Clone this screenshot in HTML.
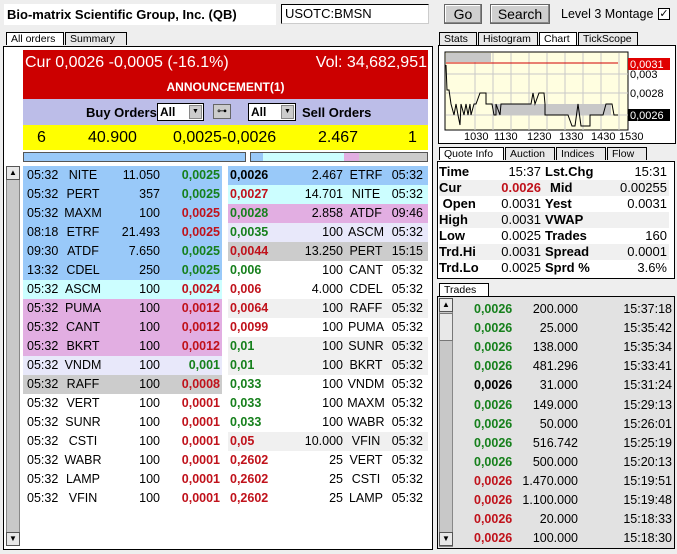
<!DOCTYPE html>
<html><head><meta charset="utf-8"><style>
*{box-sizing:border-box;margin:0;padding:0}
body{width:677px;height:554px;background:#eeeeee;font-family:"Liberation Sans",Arial,sans-serif;font-size:12px;position:relative;overflow:hidden;color:#000}
.abs{position:absolute}
.tab{position:absolute;height:13px;border:1px solid #000;border-bottom:none;background:#e8e8e8;font-size:10.5px;line-height:12px;padding-left:4px;white-space:nowrap;overflow:hidden}
.tab.on{background:#fff}
.row{position:absolute;height:19px;line-height:19px;font-size:12.5px;white-space:nowrap}
.row span{position:absolute}
.g{color:#16801c;font-weight:bold}.r{color:#c0121b;font-weight:bold}.k{color:#000;font-weight:bold}
.bl{background:#99c9f9}.cy{background:#ccfeff}.pk{background:#e2aee2}.lv{background:#e8e8fa}.gr{background:#cccccc}.lg{background:#f0f0f0}.wh{background:#fff}
.q{position:absolute;left:439px;width:230px;height:16px;line-height:16px;font-size:13px}
.q span{position:absolute}
.btn{position:absolute;border:1px solid #666;background:#cfcfcf;font-size:14px;text-align:center;line-height:18px;box-shadow:inset -1px -1px #888,inset 1px 1px #fff}
.sb{position:absolute;width:14px;background:#c8c8c8;border:1px solid #888}
.arr{position:absolute;width:14px;height:14px;background:#e8e8e8;border:1px solid #555;font-size:8px;text-align:center;line-height:12px}
</style></head><body>
<div class="abs" style="left:4px;top:4px;width:272px;height:21px;background:#fff;font-weight:bold;font-size:13px;line-height:21px;padding-left:3px">Bio-matrix Scientific Group, Inc. (QB)</div>
<div class="abs" style="left:281px;top:4px;width:148px;height:20px;background:#fff;border:1px solid #000;border-right-color:#ccc;border-bottom-color:#ccc;font-size:13px;line-height:18px;padding-left:3px">USOTC:BMSN</div>
<div class="btn" style="left:444px;top:4px;width:38px;height:20px">Go</div>
<div class="btn" style="left:490px;top:4px;width:60px;height:20px">Search</div>
<div class="abs" style="left:561px;top:5px;font-size:12.5px;line-height:18px">Level 3 Montage</div>
<div class="abs" style="left:658px;top:8px;width:12px;height:12px;border:1px solid #000;background:#fff;font-size:11px;line-height:10px;text-align:center">✓</div>

<div class="tab on" style="left:6px;top:32px;width:58px">All orders</div>
<div class="tab" style="left:65px;top:32px;width:62px">Summary</div>
<div class="abs" style="left:3px;top:46px;width:430px;height:504px;border:1px solid #000;background:#fff"></div>
<div class="abs" style="left:23px;top:50px;width:405px;height:49px;background:#cc0000;color:#fff">
<div class="abs" style="left:2px;top:4px;font-size:16px">Cur 0,0026 -0,0005 (-16.1%)</div>
<div class="abs" style="right:1px;top:4px;font-size:16px">Vol: 34,682,951</div>
<div class="abs" style="left:0;width:405px;top:30px;text-align:center;font-weight:bold;font-size:12px">ANNOUNCEMENT(1)</div></div>
<div class="abs" style="left:23px;top:99px;width:405px;height:26px;background:#bcbde8">
<div class="abs" style="left:63px;top:6px;font-weight:bold;font-size:13px">Buy Orders</div>
<div class="abs" style="left:134px;top:4px;width:47px;height:18px;background:#fff;border:1px solid #000;font-weight:bold;line-height:16px;padding-left:2px">All<div class="abs" style="right:1px;top:1px;width:13px;height:14px;background:#ccc;border:1px solid #888;font-size:7px;text-align:center;line-height:12px">▼</div></div>
<div class="abs" style="left:190px;top:5px;width:18px;height:15px;background:#ccc;border:1px solid #666;font-size:10px;text-align:center;line-height:13px">⊶</div>
<div class="abs" style="left:225px;top:4px;width:48px;height:18px;background:#fff;border:1px solid #000;font-weight:bold;line-height:16px;padding-left:2px">All<div class="abs" style="right:1px;top:1px;width:13px;height:14px;background:#ccc;border:1px solid #888;font-size:7px;text-align:center;line-height:12px">▼</div></div>
<div class="abs" style="left:279px;top:6px;font-weight:bold;font-size:13px">Sell Orders</div></div>
<div class="abs" style="left:23px;top:125px;width:405px;height:25px;background:#ffff00;font-size:16px;line-height:25px">
<span class="abs" style="left:14px">6</span><span class="abs" style="left:65px">40.900</span><span class="abs" style="left:150px">0,0025-0,0026</span><span class="abs" style="left:295px">2.467</span><span class="abs" style="left:385px">1</span></div>
<div class="abs" style="left:23px;top:152px;width:223px;height:10px;border:1px solid #555;background:#99c9f9"></div>
<div class="abs" style="left:250px;top:152px;width:178px;height:10px;border:1px solid #555;background:linear-gradient(90deg,#99c9f9 0 12px,#ccfeff 12px 93px,#e2aee2 93px 108px,#ccc 108px)"></div>

<div class="sb" style="left:6px;top:166px;height:380px"></div>
<div class="arr" style="left:6px;top:166px">▲</div>
<div class="arr" style="left:6px;top:532px">▼</div>

<div id="ob"></div>

<div class="tab" style="left:439px;top:32px;width:38px">Stats</div>
<div class="tab" style="left:478px;top:32px;width:60px">Histogram</div>
<div class="tab on" style="left:539px;top:32px;width:38px">Chart</div>
<div class="tab" style="left:578px;top:32px;width:60px">TickScope</div>
<div class="abs" style="left:438px;top:45px;width:238px;height:99px;border:1px solid #000;background:#fff"></div>
<svg class="abs" style="left:438px;top:45px" width="238" height="99">
<rect x="7" y="7" width="183" height="78" fill="#fffee0" stroke="#000"/>
<g stroke="#c8c8c8"><line x1="37" y1="8" x2="37" y2="85"/><line x1="55" y1="8" x2="55" y2="85"/><line x1="73" y1="8" x2="73" y2="85"/><line x1="91" y1="8" x2="91" y2="85"/><line x1="109" y1="8" x2="109" y2="85"/><line x1="127" y1="8" x2="127" y2="85"/><line x1="145" y1="8" x2="145" y2="85"/><line x1="163" y1="8" x2="163" y2="85"/><line x1="181" y1="8" x2="181" y2="85"/><line x1="8" y1="29" x2="190" y2="29"/><line x1="8" y1="48" x2="190" y2="48"/><line x1="8" y1="70" x2="190" y2="70"/></g>
<rect x="8" y="8" width="45" height="9" fill="#c8c8c8"/>
<rect x="55" y="59" width="118" height="11" fill="#c8c8c8"/>
<line x1="8" y1="18" x2="180" y2="18" stroke="#d00000"/>
<polyline fill="none" stroke="#000" points="8,20 9,45 11,45 13,59 16,70 18,59 20,70 22,80 23,59 26,70 28,59 30,70 32,59 33,70 36,59 38,59 42,48 48,48 48,59 54,59 56,70 58,70 58,59 62,70 63,59 93,59 95,48 97,59 101,48 106,48 107,59 107,70 130,70 134,81 137,81 140,59 143,81 152,81 152,70 165,70 168,59 174,59 176,70 180,70"/>
<rect x="190" y="13" width="42" height="12" fill="#e00000"/>
<text x="192" y="23" font-size="11" fill="#fff" font-family="Liberation Sans">0,0031</text>
<text x="192" y="33" font-size="11" font-family="Liberation Sans">0,003</text>
<text x="192" y="52" font-size="11" font-family="Liberation Sans">0,0028</text>
<rect x="190" y="64" width="42" height="12" fill="#000"/>
<text x="192" y="74" font-size="11" fill="#fff" font-family="Liberation Sans">0,0026</text>
<g font-size="11" font-family="Liberation Sans"><text x="26" y="95">1030</text><text x="56" y="95">1130</text><text x="89" y="95">1230</text><text x="121" y="95">1330</text><text x="153" y="95">1430</text><text x="181" y="95">1530</text></g>
</svg>

<div class="tab on" style="left:439px;top:147px;width:65px">Quote Info</div>
<div class="tab" style="left:505px;top:147px;width:50px">Auction</div>
<div class="tab" style="left:556px;top:147px;width:50px">Indices</div>
<div class="tab" style="left:607px;top:147px;width:40px">Flow</div>
<div class="abs" style="left:437px;top:161px;width:238px;height:118px;border:1px solid #000;background:#fff"></div>
<div id="qi"></div>

<div class="tab on" style="left:439px;top:283px;width:50px">Trades</div>
<div class="abs" style="left:437px;top:296px;width:238px;height:253px;border:1px solid #000;background:#e2e2e2"></div>
<div class="sb" style="left:439px;top:298px;height:249px;background:#c8c8c8"></div>
<div class="arr" style="left:439px;top:298px">▲</div>
<div class="abs" style="left:439px;top:313px;width:14px;height:28px;background:#e8e8e8;border:1px solid #777"></div>
<div class="arr" style="left:439px;top:532px">▼</div>
<div id="tr"></div>

<script>
var B=[["05:32","NITE","11.050","0,0025","g","bl"],["05:32","PERT","357","0,0025","g","bl"],["05:32","MAXM","100","0,0025","r","bl"],["08:18","ETRF","21.493","0,0025","r","bl"],["09:30","ATDF","7.650","0,0025","g","bl"],["13:32","CDEL","250","0,0025","g","bl"],["05:32","ASCM","100","0,0024","r","cy"],["05:32","PUMA","100","0,0012","r","pk"],["05:32","CANT","100","0,0012","r","pk"],["05:32","BKRT","100","0,0012","r","pk"],["05:32","VNDM","100","0,001","g","lv"],["05:32","RAFF","100","0,0008","r","gr"],["05:32","VERT","100","0,0001","r","wh"],["05:32","SUNR","100","0,0001","r","wh"],["05:32","CSTI","100","0,0001","r","wh"],["05:32","WABR","100","0,0001","r","wh"],["05:32","LAMP","100","0,0001","r","wh"],["05:32","VFIN","100","0,0001","r","wh"]];
var S=[["0,0026","k","2.467","ETRF","05:32","bl"],["0,0027","r","14.701","NITE","05:32","cy"],["0,0028","g","2.858","ATDF","09:46","pk"],["0,0035","g","100","ASCM","05:32","lv"],["0,0044","r","13.250","PERT","15:15","gr"],["0,006","g","100","CANT","05:32","wh"],["0,006","r","4.000","CDEL","05:32","wh"],["0,0064","r","100","RAFF","05:32","lg"],["0,0099","r","100","PUMA","05:32","wh"],["0,01","g","100","SUNR","05:32","lg"],["0,01","g","100","BKRT","05:32","lg"],["0,033","g","100","VNDM","05:32","wh"],["0,033","g","100","MAXM","05:32","wh"],["0,033","g","100","WABR","05:32","wh"],["0,05","r","10.000","VFIN","05:32","lg"],["0,2602","r","25","VERT","05:32","wh"],["0,2602","r","25","CSTI","05:32","wh"],["0,2602","r","25","LAMP","05:32","wh"]];
var h="";
for(var i=0;i<18;i++){var t=166+i*19,b=B[i];
h+='<div class="row '+b[5]+'" style="left:23px;top:'+t+'px;width:199px"><span style="left:4px">'+b[0]+'</span><span style="left:40px;width:40px;text-align:center">'+b[1]+'</span><span style="right:62px">'+b[2]+'</span><span class="'+b[4]+'" style="right:2px">'+b[3]+'</span></div>';
var s=S[i];
h+='<div class="row '+s[5]+'" style="left:228px;top:'+t+'px;width:200px"><span class="'+s[1]+'" style="left:2px">'+s[0]+'</span><span style="right:85px">'+s[2]+'</span><span style="left:118px;width:40px;text-align:center">'+s[3]+'</span><span style="right:5px">'+s[4]+'</span></div>';}
document.getElementById("ob").innerHTML=h;
var Q=[["Time","15:37","Lst.Chg","15:31"],["Cur","0.0026","Mid","0.00255"],[" Open","0.0031","Yest","0.0031"],["High","0.0031","VWAP",""],["Low","0.0025","Trades","160"],["Trd.Hi","0.0031","Spread","0.0001"],["Trd.Lo","0.0025","Sprd %","3.6%"]];
h="";for(i=0;i<7;i++){var q=Q[i];
h+='<div class="q" style="top:'+(164+i*16)+'px;background:'+(i%2?'#f0f0f0':'#fff')+'"><span style="left:0;font-weight:bold;white-space:pre">'+q[0]+'</span><span style="right:128px'+(i==1?';color:#c0121b;font-weight:bold':'')+'">'+q[1]+'</span><span style="left:'+(i==1?111:106)+'px;font-weight:bold">'+q[2]+'</span><span style="right:2px">'+q[3]+'</span></div>';}
document.getElementById("qi").innerHTML=h;
var T=[["g","200.000","15:37:18"],["g","25.000","15:35:42"],["g","138.000","15:35:34"],["g","481.296","15:33:41"],["k","31.000","15:31:24"],["g","149.000","15:29:13"],["g","50.000","15:26:01"],["g","516.742","15:25:19"],["g","500.000","15:20:13"],["r","1.470.000","15:19:51"],["r","1.100.000","15:19:48"],["r","20.000","15:18:33"],["r","100.000","15:18:30"]];
h="";for(i=0;i<13;i++){var r=T[i];
h+='<div class="row" style="left:455px;top:'+(300+i*19.1)+'px;width:218px"><span class="'+r[0]+'" style="left:19px">0,0026</span><span style="right:95px">'+r[1]+'</span><span style="right:1px">'+r[2]+'</span></div>';}
document.getElementById("tr").innerHTML=h;
</script>
</body></html>
